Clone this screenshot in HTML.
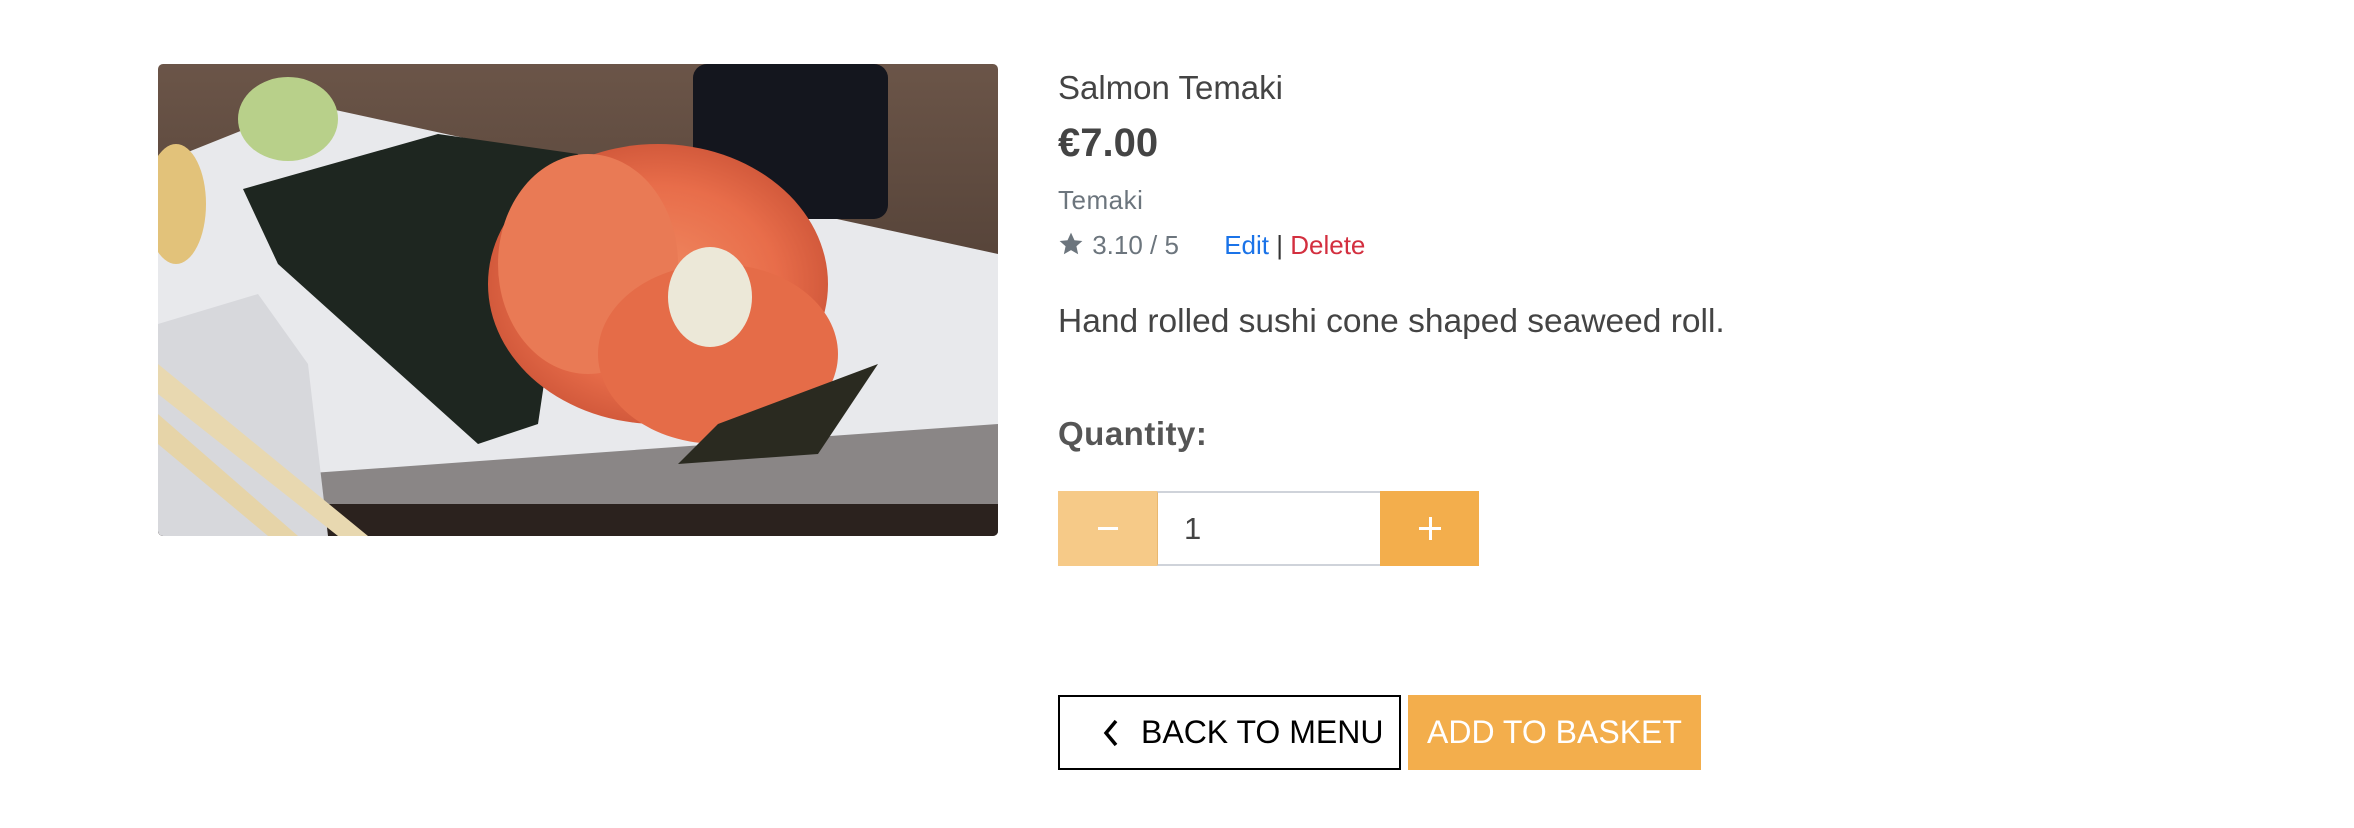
<!DOCTYPE html>
<html><head><meta charset="utf-8"><style>
body{margin:0;width:2354px;height:828px;background:#fff;font-family:"Liberation Sans",sans-serif;position:relative;overflow:hidden}
.a{position:absolute;white-space:nowrap}
</style></head><body>
<div class="a" style="left:158px;top:64px;width:840px;height:472px;border-radius:5px;overflow:hidden">
<svg width="840" height="472" viewBox="0 0 840 472">
<defs>
<linearGradient id="bg" x1="0" y1="0" x2="0" y2="1"><stop offset="0" stop-color="#6b5548"/><stop offset="1" stop-color="#3a2c25"/></linearGradient>
<radialGradient id="sal" cx="0.5" cy="0.5" r="0.5"><stop offset="0" stop-color="#f08a62"/><stop offset="0.7" stop-color="#e86d4a"/><stop offset="1" stop-color="#d35a3c"/></radialGradient>
</defs>
<rect width="840" height="472" fill="url(#bg)"/>
<polygon points="0,100 150,40 840,190 840,472 0,472" fill="#e8e9ec"/>
<rect x="0" y="440" width="840" height="32" fill="#2a211d"/>
<polygon points="0,420 840,360 840,472 0,472" fill="#2c2420" opacity="0.5"/>
<rect x="535" y="0" width="195" height="155" rx="14" fill="#14161e"/>
<ellipse cx="130" cy="55" rx="50" ry="42" fill="#b8d08a"/>
<ellipse cx="18" cy="140" rx="30" ry="60" fill="#e2c27a"/>
<polygon points="85,125 280,70 420,90 380,360 320,380 120,200" fill="#1e2620"/>
<ellipse cx="500" cy="220" rx="170" ry="140" fill="url(#sal)"/>
<ellipse cx="430" cy="200" rx="90" ry="110" fill="#e97a55"/>
<ellipse cx="560" cy="290" rx="120" ry="90" fill="#e56c48"/>
<polygon points="560,360 720,300 660,390 520,400" fill="#2a2a20"/>
<ellipse cx="552" cy="233" rx="42" ry="50" fill="#ece8d8"/>
<polygon points="0,260 100,230 150,300 170,472 0,472" fill="#d7d8dc"/>
<polygon points="0,300 210,472 180,472 0,330" fill="#e8d8b0"/>
<polygon points="0,350 140,472 110,472 0,380" fill="#e6d4a8"/>
</svg></div>
<div class="a" style="left:1058px;top:69px;font-size:33px;color:#444">Salmon Temaki</div>
<div class="a" style="left:1058px;top:121px;font-size:40px;font-weight:bold;color:#444">€7.00</div>
<div class="a" style="left:1058px;top:185px;font-size:26px;color:#6c757d;letter-spacing:0.5px">Temaki</div>
<div class="a" style="left:1057px;top:230px;font-size:26px;color:#6c757d">
<svg width="28" height="26" viewBox="0 0 24 24" style="vertical-align:-3px"><path d="M12 1.5l3.2 7 7.3.7-5.5 4.9 1.6 7.4L12 17.7l-6.6 3.8 1.6-7.4L1.5 9.2l7.3-.7z" fill="#6c757d"/></svg> 3.10 / 5
<span style="margin-left:38px;color:#1a73e8">Edit</span> <span style="color:#333">|</span> <span style="color:#d32f3f">Delete</span></div>
<div class="a" style="left:1058px;top:303px;font-size:33.5px;color:#444">Hand rolled sushi cone shaped seaweed roll.</div>
<div class="a" style="left:1058px;top:415px;font-size:33px;font-weight:bold;color:#555;letter-spacing:0.5px">Quantity:</div>
<div class="a" style="left:1058px;top:491px;width:99px;height:75px;background:#f6ca88"><div style="position:absolute;left:40px;top:36px;width:20px;height:3px;background:#fff"></div></div>
<div class="a" style="left:1157px;top:491px;width:223px;height:71px;border:2px solid #cfd3da;border-left:1px solid #e9b870;border-right:none;background:#fff;font-size:31px;color:#444;line-height:71px"><span style="margin-left:26px">1</span></div>
<div class="a" style="left:1380px;top:491px;width:99px;height:75px;background:#f3ae4c"><div style="position:absolute;left:39px;top:36px;width:22px;height:3px;background:#fff"></div><div style="position:absolute;left:48.5px;top:26px;width:3px;height:23px;background:#fff"></div></div>
<div class="a" style="left:1058px;top:695px;width:339px;height:71px;border:2px solid #000;font-size:32px;line-height:71px;color:#000">
<svg width="20" height="30" viewBox="0 0 20 30" style="position:absolute;left:42px;top:21px"><path d="M14 3L4 15l10 12" fill="none" stroke="#000" stroke-width="3.5"/></svg>
<span style="position:absolute;left:81px">BACK TO MENU</span></div>
<div class="a" style="left:1408px;top:695px;width:293px;height:75px;background:#f3ae4c;color:#fff;font-size:32px;line-height:75px;text-align:center">ADD TO BASKET</div>
</body></html>
